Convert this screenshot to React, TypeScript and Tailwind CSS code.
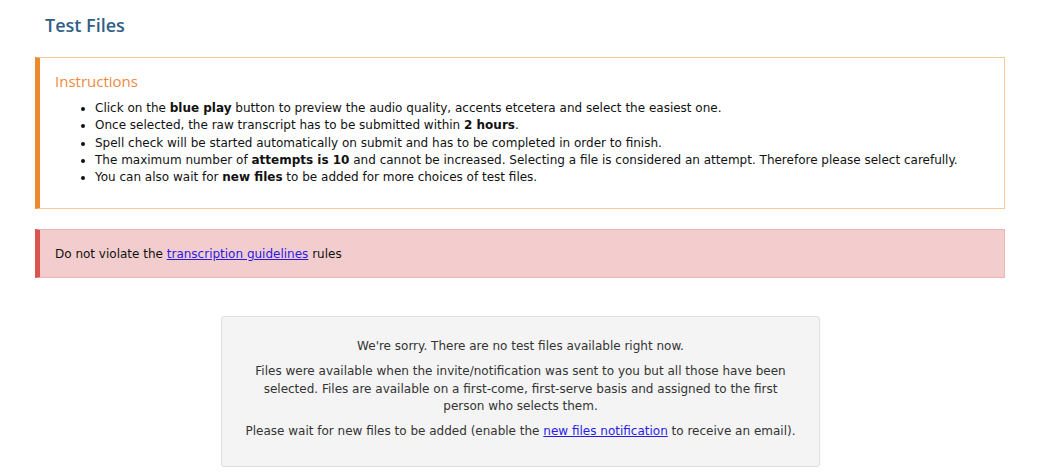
export default function App() {
  const body = { fontFamily: '"DejaVu Sans", Verdana, sans-serif' };
  return (
    <div className="min-h-[472px] bg-white text-[12px] text-[#111]" style={body}>
      <div className="pl-[35px] pt-[12px]">
        <h1 className="pl-[10px] text-[18px] font-semibold text-[#2f5f87] leading-[26px]" style={{ fontFamily: '"Open Sans", sans-serif' }}>
          Test Files
        </h1>
        <div className="w-[970px] mt-[19px] border border-[#f6c99b] border-l-[5px] border-l-[#ee8a2e] pl-[15px] pr-4 pt-[11px] pb-[22px]">
          <h2 className="text-[15px] text-[#ef8a3c] leading-[24px]" style={{ fontFamily: '"Open Sans", sans-serif' }}>
            Instructions
          </h2>
          <ul className="list-disc pl-[40px] mt-[7px] leading-[17.25px]">
            <li>Click on the <b>blue play</b> button to preview the audio quality, accents etcetera and select the easiest one.</li>
            <li>Once selected, the raw transcript has to be submitted within <b>2 hours</b>.</li>
            <li>Spell check will be started automatically on submit and has to be completed in order to finish.</li>
            <li>The maximum number of <b>attempts is 10</b> and cannot be increased. Selecting a file is considered an attempt. Therefore please select carefully.</li>
            <li>You can also wait for <b>new files</b> to be added for more choices of test files.</li>
          </ul>
        </div>
        <div className="w-[970px] mt-[20px] h-[49px] flex items-center bg-[#f3cdcd] border border-[#ecb4b4] border-l-[5px] border-l-[#d9534f] pl-[15px]">
          <span>
            Do not violate the <a href="#" className="text-[#2a1ae8] underline">transcription guidelines</a> rules
          </span>
        </div>
      </div>
      <div className="pl-[221px] mt-[38px]">
        <div className="w-[599px] h-[151px] bg-[#f4f4f4] border border-[#dedede] rounded-[3px] text-center text-[#333] px-[20px] pt-[21px] leading-[17.5px]">
          <p>We're sorry. There are no test files available right now.</p>
          <p className="mt-[7.5px]">Files were available when the invite/notification was sent to you but all those have been selected. Files are available on a first-come, first-serve basis and assigned to the first person who selects them.</p>
          <p className="mt-[7.5px]">Please wait for new files to be added (enable the <a href="#" className="text-[#2a1ae8] underline">new files notification</a> to receive an email).</p>
        </div>
      </div>
    </div>
  );
}
